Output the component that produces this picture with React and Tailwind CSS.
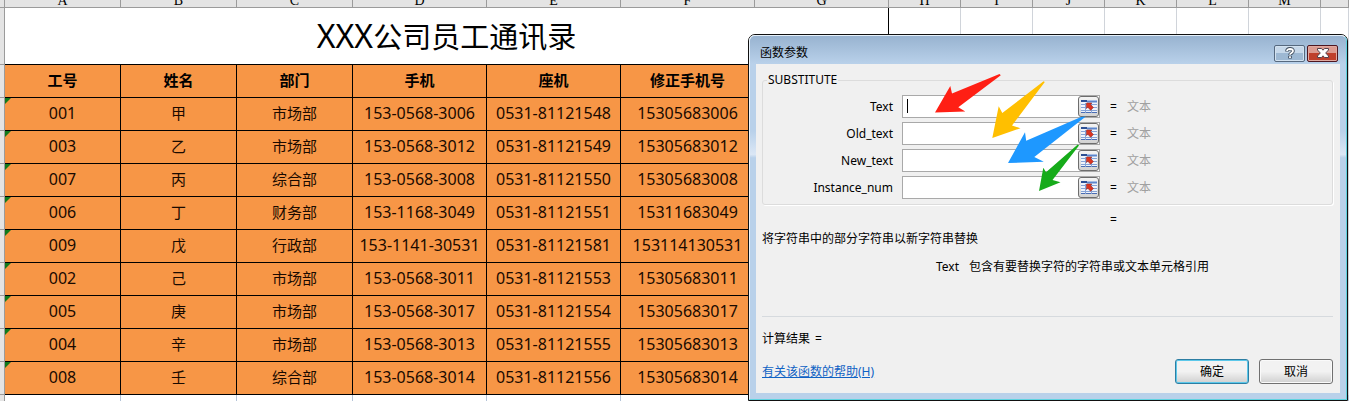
import React from "react";

const SANS = "font-['Noto_Sans','Noto_Sans_CJK_SC',sans-serif]";

const LETTERS = ["A", "B", "C", "D", "E", "F", "G", "H", "I", "J", "K", "L", "M", ""];

const FIELDS = ["工号", "姓名", "部门", "手机", "座机", "修正手机号", ""];

const STAFF = [
  ["001", "甲", "市场部", "153-0568-3006", "0531-81121548", "15305683006"],
  ["003", "乙", "市场部", "153-0568-3012", "0531-81121549", "15305683012"],
  ["007", "丙", "综合部", "153-0568-3008", "0531-81121550", "15305683008"],
  ["006", "丁", "财务部", "153-1168-3049", "0531-81121551", "15311683049"],
  ["009", "戊", "行政部", "153-1141-30531", "0531-81121581", "153114130531"],
  ["002", "己", "市场部", "153-0568-3011", "0531-81121553", "15305683011"],
  ["005", "庚", "市场部", "153-0568-3017", "0531-81121554", "15305683017"],
  ["004", "辛", "市场部", "153-0568-3013", "0531-81121555", "15305683013"],
  ["008", "壬", "综合部", "153-0568-3014", "0531-81121556", "15305683014"],
];

const ARGS = ["Text", "Old_text", "New_text", "Instance_num"];

function RowHead() {
  return <td className="border-r border-b border-[#9b9b9b] bg-[#e4e4e4] p-0" />;
}

function BlankCells({ count }) {
  return Array.from({ length: count }, (_, i) => (
    <td key={i} className="border-r border-b border-[#d0d4da] p-0" />
  ));
}

function Sheet() {
  return (
    <table className="w-full min-w-[1349px] table-fixed border-separate border-spacing-0 text-black">
      <colgroup>
        <col className="w-[5px]" />
        <col className="w-[116px]" />
        <col className="w-[116px]" />
        <col className="w-[116px]" />
        <col className="w-[134px]" />
        <col className="w-[134px]" />
        <col className="w-[134px]" />
        <col className="w-[134px]" />
        <col className="w-[72px]" />
        <col className="w-[72px]" />
        <col className="w-[72px]" />
        <col className="w-[72px]" />
        <col className="w-[72px]" />
        <col className="w-[72px]" />
        <col />
      </colgroup>
      <thead>
        <tr className="h-2">
          <td className="border-r border-b border-[#9b9b9b] bg-[#e4e4e4] p-0" />
          {LETTERS.map((l, i) => (
            <th key={i} className="border-r border-b border-[#9b9b9b] bg-[#e4e4e4] p-0 font-normal">
              <div className="flex h-[7px] items-end justify-center overflow-hidden font-['Liberation_Serif',serif] text-sm leading-3">
                {l}
              </div>
            </th>
          ))}
        </tr>
      </thead>
      <tbody>
        <tr className="h-[57px]">
          <RowHead />
          <td colSpan={7} className="border-r border-b border-black p-0 text-center text-[29px] leading-10">
            <span className="text-[32px]">XXX</span>公司员工通讯录
          </td>
          <BlankCells count={7} />
        </tr>
        <tr className="h-[33px]">
          <RowHead />
          {FIELDS.map((f, i) => (
            <th key={i} className="border-r border-b border-black bg-[#f79646] p-0 pb-0.5 text-[15px] leading-5 font-bold">
              {f}
            </th>
          ))}
          <BlankCells count={7} />
        </tr>
        {STAFF.map((row) => (
          <tr key={row[0]} className="h-[33px]">
            <RowHead />
            {row.map((v, i) => (
              <td
                key={i}
                className={
                  "relative border-r border-b border-black bg-[#f79646] p-0 pb-0.5 text-center leading-5 whitespace-nowrap text-[#1a0a00] " +
                  (i === 1 || i === 2 ? "text-[15px]" : "text-base")
                }
              >
                {i === 0 && (
                  <svg className="absolute top-0 left-0 size-[6px]" viewBox="0 0 6 6" aria-hidden="true">
                    <path d="M0 0H6L0 6Z" fill="#117a1c" />
                  </svg>
                )}
                {v}
              </td>
            ))}
            <td className="border-r border-b border-black bg-[#f79646] p-0" />
            <BlankCells count={7} />
          </tr>
        ))}
        <tr className="h-[6px]">
          <td className="border-r border-[#9b9b9b] bg-[#e4e4e4] p-0" />
          {LETTERS.map((_, i) => (
            <td key={i} className="border-r border-dashed border-[#b4c4d8] p-0" />
          ))}
        </tr>
      </tbody>
    </table>
  );
}

function RangeIcon() {
  return (
    <svg viewBox="0 0 16 14" className="h-[14px] w-4 shrink-0" aria-hidden="true">
      <rect x="0" y="0" width="16" height="13" fill="#eef3fb" />
      <path d="M0 1H6" stroke="#2c4f94" strokeWidth="2" />
      <path d="M6 1.5H16" stroke="#5d86cc" strokeWidth="2" />
      <path d="M0 4.5H16M0 7.5H16M0 10.5H16" stroke="#86a3d6" strokeWidth="1" />
      <path d="M0 12.5H16" stroke="#4a6db3" strokeWidth="1" />
      <path d="M4.5 3V13M10.5 3V13" stroke="#86a3d6" strokeWidth="1" />
      <path d="M5.5 3H10.8L9.6 4.4L12.4 7.6L9.6 10.2L6.8 7.2L5.5 8.6Z" fill="#dc3420" stroke="#96302e" strokeWidth="0.6" />
    </svg>
  );
}

function ArgumentRow({ name, caret }) {
  const id = "arg-" + name;
  return (
    <div className="flex h-[23px] items-center text-xs">
      <label htmlFor={id} className="w-[130px] text-right leading-4">
        {name}
      </label>
      <div className="relative ml-[9px] flex h-[23px] w-[198px] items-center border border-[#a9a9a9] bg-white">
        <input id={id} type="text" className="h-full min-w-0 flex-1 bg-transparent px-1 outline-none" />
        {caret && <span className="absolute top-[3px] left-1 h-[14px] w-px bg-black" />}
        <button
          type="button"
          aria-label={"选择 " + name}
          className="flex h-[21px] w-[21px] items-center justify-center rounded-[3px] border border-[#6d6d6d] bg-linear-to-b from-[#f4f4f4] to-[#d2d2d2]"
        >
          <RangeIcon />
        </button>
      </div>
      <span className="ml-[10px] w-[17px] leading-4">=</span>
      <span className="text-[#a0a0a0] leading-4">文本</span>
    </div>
  );
}

function Arrows() {
  return (
    <svg
      className="pointer-events-none absolute top-[35px] left-[181px] h-[125px] w-40"
      viewBox="930 70 160 125"
      aria-hidden="true"
    >
      <path d="M935 112.5L950.3 86L952 93.5L999.5 74L1000.8 75.2L958.3 107.3L965.3 111.4Z" fill="#ff1f14" />
      <path d="M992.3 138L998.7 106.3L1002.3 113L1043.6 81.2L1044.8 82L1012 125.5L1020.5 128.2Z" fill="#ffbf00" />
      <path d="M1008 163L1025 132.3L1026.2 140.7L1081 117L1085.8 116.5L1034.3 157L1043.8 161.8Z" fill="#1e98ff" />
      <path d="M1039 191L1043.3 167.7L1046 172.3L1077.8 144.6L1079 145.4L1052.5 180L1060.5 182.2Z" fill="#16ab1a" />
    </svg>
  );
}

function Dialog() {
  return (
    <section
      role="dialog"
      aria-labelledby="dialog-title"
      className="absolute top-[34px] left-[748px] w-[600px] rounded-t-[7px] border border-[#111] text-xs text-black"
    >
      <div className="rounded-t-[6px] border border-t-[#e6f1fa] border-r-[#5fd3e0] border-b-[#5fd3e0] border-l-[#eef5fb] bg-[#b9d1ea]">
        <header className="flex h-7 items-center rounded-t-[5px] bg-linear-to-b from-[#98b3d0] to-[#b9d1ea] pr-2 pl-[10px]">
          <h1 id="dialog-title" className="flex-1 pt-1.5 leading-4">
            函数参数
          </h1>
          <div className="flex gap-0.5 pt-1.5">
            <button
              type="button"
              aria-label="帮助"
              className="flex h-[17px] w-[31px] items-center justify-center rounded-[2px] border border-[#56697f] bg-linear-to-b from-[#c6d8ea] from-50% to-[#9db8d3] to-50% shadow-[inset_0_0_0_1px_#d3e2f0]"
            >
              <svg viewBox="0 0 10 12" className="h-3 w-[10px] shrink-0" aria-hidden="true">
                <path d="M2 4.4C2 1 8 1 8 4.1C8 6 5 6 5 8.2M5 9V11.4" fill="none" stroke="#3f4c5c" strokeWidth="3.6" />
                <path d="M2 4C2 1.3 8 1.3 8 4.1C8 6 5 6 5 7.8M5 9.2V11" fill="none" stroke="#fff" strokeWidth="1.8" />
              </svg>
            </button>
            <button
              type="button"
              aria-label="关闭"
              className="flex h-[17px] w-[31px] items-center justify-center rounded-[2px] border border-[#4e1620] bg-linear-to-b from-[#dc9a90] from-50% to-[#bf3f2c] to-50% shadow-[inset_0_0_0_1px_#e0a9a0]"
            >
              <svg viewBox="0 0 12 10" className="h-[10px] w-3 shrink-0" aria-hidden="true">
                <path d="M0.5 0.5H4.5L6 2.2L7.5 0.5H11.5V2L8.7 5L11.5 8V9.5H7.5L6 7.8L4.5 9.5H0.5V8L3.3 5L0.5 2Z" fill="#fff" stroke="#54424c" strokeWidth="1" />
              </svg>
            </button>
          </div>
        </header>
        <div className="bg-linear-to-b from-[#b9d1ea] from-20% via-[#dbe7f5] via-27% to-[#b9d1ea] to-28% px-[6px] pb-[6px]">
          <form className="flex flex-col bg-[#f0f0f0] pt-2 pr-[7px] pb-[9px] pl-[6px]" onSubmit={(e) => e.preventDefault()}>
            <fieldset className="rounded-[3px] border border-[#dcdcdc] pb-[5px] shadow-[1px_1px_0_#fff]">
              <legend className="ml-1 px-px leading-4">SUBSTITUTE</legend>
              <div className="flex flex-col gap-1 pt-[7px]">
                {ARGS.map((name, i) => (
                  <ArgumentRow key={name} name={name} caret={i === 0} />
                ))}
              </div>
            </fieldset>
            <p className="mt-[7px] pl-[348px] leading-4">=</p>
            <p className="mt-[3px] leading-4">将字符串中的部分字符串以新字符串替换</p>
            <p className="mt-3 flex gap-[10px] pl-[174px] leading-4">
              <span>Text</span>
              <span>包含有要替换字符的字符串或文本单元格引用</span>
            </p>
            <hr className="mt-[41px] border-[#d6dade]" />
            <p className="mt-[14px] flex gap-[5px] leading-4">
              <span>计算结果</span>
              <span>=</span>
            </p>
            <div className="mt-3 flex items-center gap-[10px]">
              <a href="#help" className="mr-auto text-[#0f62c4] underline">
                有关该函数的帮助(H)
              </a>
              <button
                type="submit"
                className="h-[25px] w-[74px] rounded-[3px] border border-[#2c7ea3] bg-linear-to-b from-[#f2f2f2] from-50% to-[#d0d0d0] shadow-[inset_0_0_0_1px_#5cc8ea]"
              >
                确定
              </button>
              <button
                type="button"
                className="h-[25px] w-[74px] rounded-[3px] border border-[#707070] bg-linear-to-b from-[#f2f2f2] from-50% to-[#d0d0d0] shadow-[inset_0_0_0_1px_#fafafa]"
              >
                取消
              </button>
            </div>
          </form>
        </div>
      </div>
      <Arrows />
    </section>
  );
}

export default function App() {
  return (
    <main className={"relative min-h-screen overflow-hidden bg-white " + SANS}>
      <Sheet />
      <Dialog />
    </main>
  );
}
